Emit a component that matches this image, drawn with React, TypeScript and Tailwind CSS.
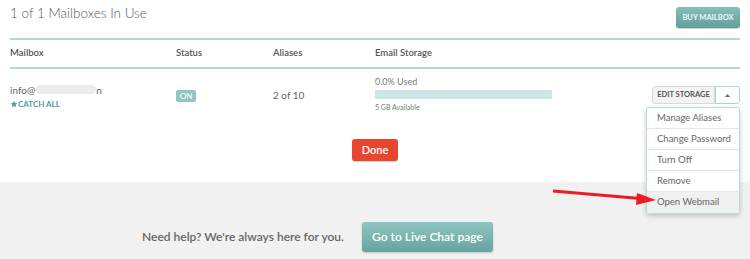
import React from 'react';

const font = { fontFamily: 'Lato, "Open Sans", sans-serif' };

const menuItems = ['Manage Aliases', 'Change Password', 'Turn Off', 'Remove', 'Open Webmail'];

const App: React.FC = () => {
  return (
    <div className="relative w-[750px] h-[259px] overflow-hidden bg-white text-[#555]" style={font}>
      {/* top panel */}
      <div className="h-[182px] px-[10px]">
        <div className="flex justify-between items-start h-[38px] pt-[5px]">
          <h1 className="text-[13.5px] font-light leading-[16px] text-[#5a5a5a]">1 of 1 Mailboxes In Use</h1>
          <button className="mt-[2px] h-[21px] w-[64px] rounded-[3px] bg-gradient-to-b from-[#86bfba] to-[#619f9a] text-[7.5px] font-bold text-white/90 shadow-[0_1px_1px_rgba(0,0,0,0.2)]">
            BUY MAILBOX
          </button>
        </div>

        <div className="h-[2px] bg-[#b1d8d5]" />
        <div className="grid grid-cols-[166px_97px_102px_1fr] h-[27px] items-center text-[9.5px] font-semibold text-[#555]">
          <div>Mailbox</div>
          <div>Status</div>
          <div>Aliases</div>
          <div>Email Storage</div>
        </div>
        <div className="h-[2px] bg-[#b1d8d5]" />

        <div className="grid grid-cols-[166px_97px_102px_177px_1fr] h-[46px] items-center text-[10px]">
          <div className="flex flex-col pt-[9px]">
            <div className="flex items-center leading-[12px] text-[#666]">
              info@
              <span className="inline-block w-[60px] h-[9px] ml-[1px] rounded-sm bg-[#ececec]" />
              n
            </div>
            <div className="flex items-center mt-[2px] text-[8px] font-bold text-[#4f9c96]">
              <svg width="8" height="8" viewBox="0 0 24 24" fill="#4f9c96">
                <path d="M12 2l3 7 7 .6-5.3 4.7 1.6 7.2L12 17.8 5.7 21.5l1.6-7.2L2 9.6 9 9z" />
              </svg>
              CATCH ALL
            </div>
          </div>
          <div className="pt-[6px]">
            <span className="inline-flex items-center justify-center w-[20px] h-[12px] rounded-[2px] bg-[#8ec6c2] text-[8px] text-white">
              ON
            </span>
          </div>
          <div className="pt-[6px] text-[10px] text-[#666]">2 of 10</div>
          <div className="flex flex-col">
            <div className="text-[9px] leading-[12px] text-[#777] mt-[4px]">0.0% Used</div>
            <div className="h-[9px] mt-[2px] bg-[#cfe6e6]" />
            <div className="text-[7px] leading-[10px] mt-[3px] text-[#777]">5 GB Available</div>
          </div>
          <div className="relative flex justify-end pt-[6px]">
            <div className="flex h-[18px]">
              <button className="w-[63px] rounded-l-[3px] border border-[#d8d8d8] bg-[#f4f4f4] text-[7.5px] font-bold text-[#555]">
                EDIT STORAGE
              </button>
              <button className="w-[25px] flex items-center justify-center rounded-r-[3px] border border-[#a9d4d1] bg-white">
                <svg width="5" height="3" viewBox="0 0 5 3">
                  <path d="M0 3 L2.5 0 L5 3 Z" fill="#666" />
                </svg>
              </button>
            </div>
            {/* dropdown */}
            <div className="absolute right-0 top-[27px] w-[94px] rounded-[3px] border border-[#b9dcd9] bg-white shadow-[0_2px_5px_rgba(0,0,0,0.2)] z-10">
              {menuItems.map((item, i) => (
                <div
                  key={item}
                  className={`h-[21px] flex items-center pl-[10px] text-[9.5px] text-[#666] ${i < menuItems.length - 1 ? 'border-b border-[#e6e6e6]' : ''} ${i === menuItems.length - 1 ? 'bg-[#f0f0f0] text-[#444]' : ''}`}
                >
                  {item}
                </div>
              ))}
            </div>
          </div>
        </div>

        <div className="flex justify-center mt-[24px]">
          <button className="w-[46px] h-[22px] rounded-[3px] bg-[#e8472f] text-[11px] font-semibold text-white shadow-[0_1px_1px_rgba(0,0,0,0.2)]">
            Done
          </button>
        </div>
      </div>

      {/* help panel */}
      <div className="h-[77px] bg-[#f1f1f1] flex items-start pt-[40px] pl-[142px]">
        <span className="text-[12px] font-semibold text-[#666] leading-[30px]">Need help? We're always here for you.</span>
        <button className="ml-[18px] w-[131px] h-[30px] rounded-[3px] bg-gradient-to-b from-[#8ec6c1] to-[#66a49f] text-[12px] font-semibold text-white shadow-[0_1px_2px_rgba(0,0,0,0.2)]">
          Go to Live Chat page
        </button>
      </div>

      {/* annotation arrow */}
      <svg className="absolute left-0 top-0 pointer-events-none z-20" width="750" height="259">
        <line x1="553" y1="191" x2="640" y2="198.5" stroke="#ec1c24" strokeWidth="3" />
        <polygon points="656,200 637,193 636,205" fill="#ec1c24" />
      </svg>
    </div>
  );
};

export default App;
